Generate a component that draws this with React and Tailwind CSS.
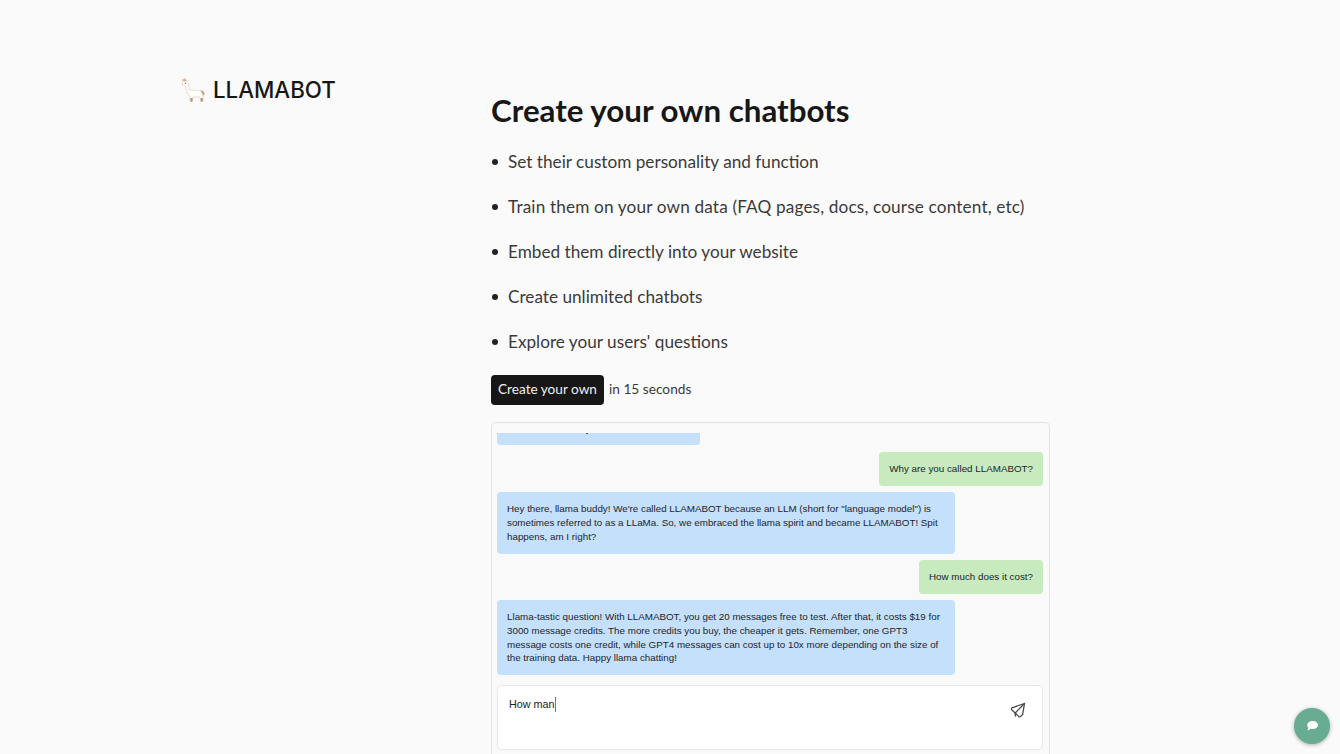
const LATO = "[font-family:Lato,'Noto_Sans',sans-serif]";
const INTER = "[font-family:Inter,sans-serif]";
const ARIAL = "[font-family:'Liberation_Sans',Arial,sans-serif]";

function Llama() {
  return (
    <svg width="26" height="28" viewBox="0 0 26 28" className="shrink-0">
      <path d="M2.5 6.5 L2 3.5 L4 4.6 L5 2 L6.8 5 L8.4 7 L9 13 C11 15 16 14 19 14.5 C22.5 15 23.8 17 23.3 20 L22.8 25.5 L20.8 25.5 L20 21 L13 21 L12.5 25.5 L10.3 25.5 L9.5 20 C7 18 5.8 14 5.6 10 L2.6 9.4 Z" fill="#fffefb" stroke="#ddcdbf" strokeWidth="0.7" strokeLinejoin="round" />
      <path d="M20.5 14.6 C23 14.2 25 16 24.4 19 L23 19.6 Z" fill="#c8a488" />
      <path d="M10.4 22 L12.6 22 L12.5 25.6 L10.3 25.6 Z M20.6 22 L22.9 22 L22.8 25.6 L20.8 25.6 Z" fill="#bb9576" />
      <path d="M2.6 3.8 L5 2.4 L6.4 5 L4 5.6 Z" fill="#d6ae92" />
      <circle cx="5.4" cy="7.3" r="0.6" fill="#4a3a30" />
    </svg>
  );
}

function Bubble({ side, className = "", children }) {
  const tone = side === "user" ? "bg-[#c7eabf]" : "bg-[#c5e0fa]";
  return (
    <div className={`${tone} shrink-0 whitespace-nowrap rounded-[4px] text-[9.8px] leading-[13.8px] text-[#1d242c] ${ARIAL} ${className}`}>
      {children}
    </div>
  );
}

function SendIcon() {
  return (
    <svg width="16" height="16" viewBox="0 0 16 16" fill="none" stroke="#4a4a4a" strokeWidth="1.3" strokeLinejoin="round" strokeLinecap="round" className="mt-[5px]">
      <path d="M14.5 1.5 L2 5.8 Q1 6.6 1.7 7.7 L8.7 14.4 Q9.7 15.3 10.8 14.3 L12.6 12.6 Z" />
      <path d="M14.5 1.5 L5.2 11" />
      <path d="M5.2 11 L5.4 14" />
    </svg>
  );
}

const items = [
  { t: "Set their custom personality and function", c: "" },
  { t: "Train them on your own data (FAQ pages, docs, course content, etc)", c: "tracking-[0.15px]" },
  { t: "Embed them directly into your website", c: "" },
  { t: "Create unlimited chatbots", c: "" },
  { t: "Explore your users' questions", c: "" },
];

export default function App() {
  return (
    <div className={`relative h-[754px] w-[1340px] overflow-hidden bg-[#fafafa] ${LATO}`}>
      <div className="flex h-full pl-[180px]">
        <div className="w-[311px] shrink-0 pt-[76px]">
          <div className="flex items-center gap-[7px]">
            <Llama />
            <span className={`whitespace-nowrap text-[22.3px] font-medium leading-[28px] text-[#171717] ${INTER}`}>LLAMABOT</span>
          </div>
        </div>

        <main className="w-[559px] pt-[91px]">
          <h1 className="whitespace-nowrap text-[31.3px] font-bold leading-[38px] text-[#171717]">Create your own chatbots</h1>

          <ul className="mt-[10px] flex flex-col">
            {items.map(({ t, c }) => (
              <li key={t} className={`flex h-[45.2px] items-center whitespace-nowrap text-[17.2px] text-[#3a3a3a] ${c}`}>
                <span className="ml-[1px] mr-[10px] h-[6px] w-[6px] rounded-full bg-[#222]" />
                {t}
              </li>
            ))}
          </ul>

          <div className="mt-[10px] flex items-center gap-[5px]">
            <span className="flex h-[30px] w-[113px] items-center justify-center whitespace-nowrap rounded-[4px] bg-[#171717] pb-[1px] text-[13.6px] text-[#f0f0f0]">Create your own</span>
            <span className="whitespace-nowrap pb-[1px] text-[13.7px] text-[#3a3a3a]">in 15 seconds</span>
          </div>

          <div className="mt-[17px] flex h-[340px] flex-col rounded-t-[5px] border border-b-0 border-[#e4e4e4] bg-[#f9f9f9] px-[5px] pt-[10px]">
            <Bubble side="bot" className="h-[12px] w-[203px] rounded-t-none">
              <div className="ml-[89px] h-px w-[2px] bg-[#555]" />
            </Bubble>
            <div className="mt-[7px] flex flex-col gap-[6.4px]">
              <Bubble side="user" className="mr-[1px] self-end p-[10px]">Why are you called LLAMABOT?</Bubble>
              <Bubble side="bot" className="w-[458px] p-[10px]">Hey there, llama buddy! We're called LLAMABOT because an LLM (short for "language model") is<br />sometimes referred to as a LLaMa. So, we embraced the llama spirit and became LLAMABOT! Spit<br />happens, am I right?</Bubble>
              <Bubble side="user" className="mr-[1px] self-end p-[10px]">How much does it cost?</Bubble>
              <Bubble side="bot" className="w-[458px] p-[10px]">Llama-tastic question! With LLAMABOT, you get 20 messages free to test. After that, it costs $19 for<br />3000 message credits. The more credits you buy, the cheaper it gets. Remember, one GPT3<br />message costs one credit, while GPT4 messages can cost up to 10x more depending on the size of<br />the training data. Happy llama chatting!</Bubble>
            </div>
            <div className="mr-[1px] mt-[10px] flex h-[65px] shrink-0 items-start justify-between rounded-[4px] border border-[#e8e8e8] bg-white pl-[11px] pr-[16px] pt-[11px]">
              <span className={`border-r border-[#777] text-[10.8px] leading-[15px] text-[#222] ${ARIAL}`}>How man</span>
              <SendIcon />
            </div>
          </div>
        </main>
      </div>

      <div className="absolute left-[1294px] top-[708px] flex h-[36px] w-[36px] items-center justify-center rounded-full bg-[#69ac94] shadow-[0_1px_4px_rgba(0,0,0,0.3)]">
        <svg width="13" height="12" viewBox="0 0 13 12" fill="#fff">
          <path d="M6.8 1 C10 1 12 2.7 12 5 C12 7.3 10 9 6.8 9 C6 9 5.3 8.9 4.7 8.7 C3.8 9.6 2.6 10.2 1.3 10.3 C2 9.5 2.4 8.7 2.4 7.6 C1.6 6.9 1.2 6 1.2 5 C1.2 2.7 3.6 1 6.8 1 Z" />
        </svg>
      </div>
    </div>
  );
}
